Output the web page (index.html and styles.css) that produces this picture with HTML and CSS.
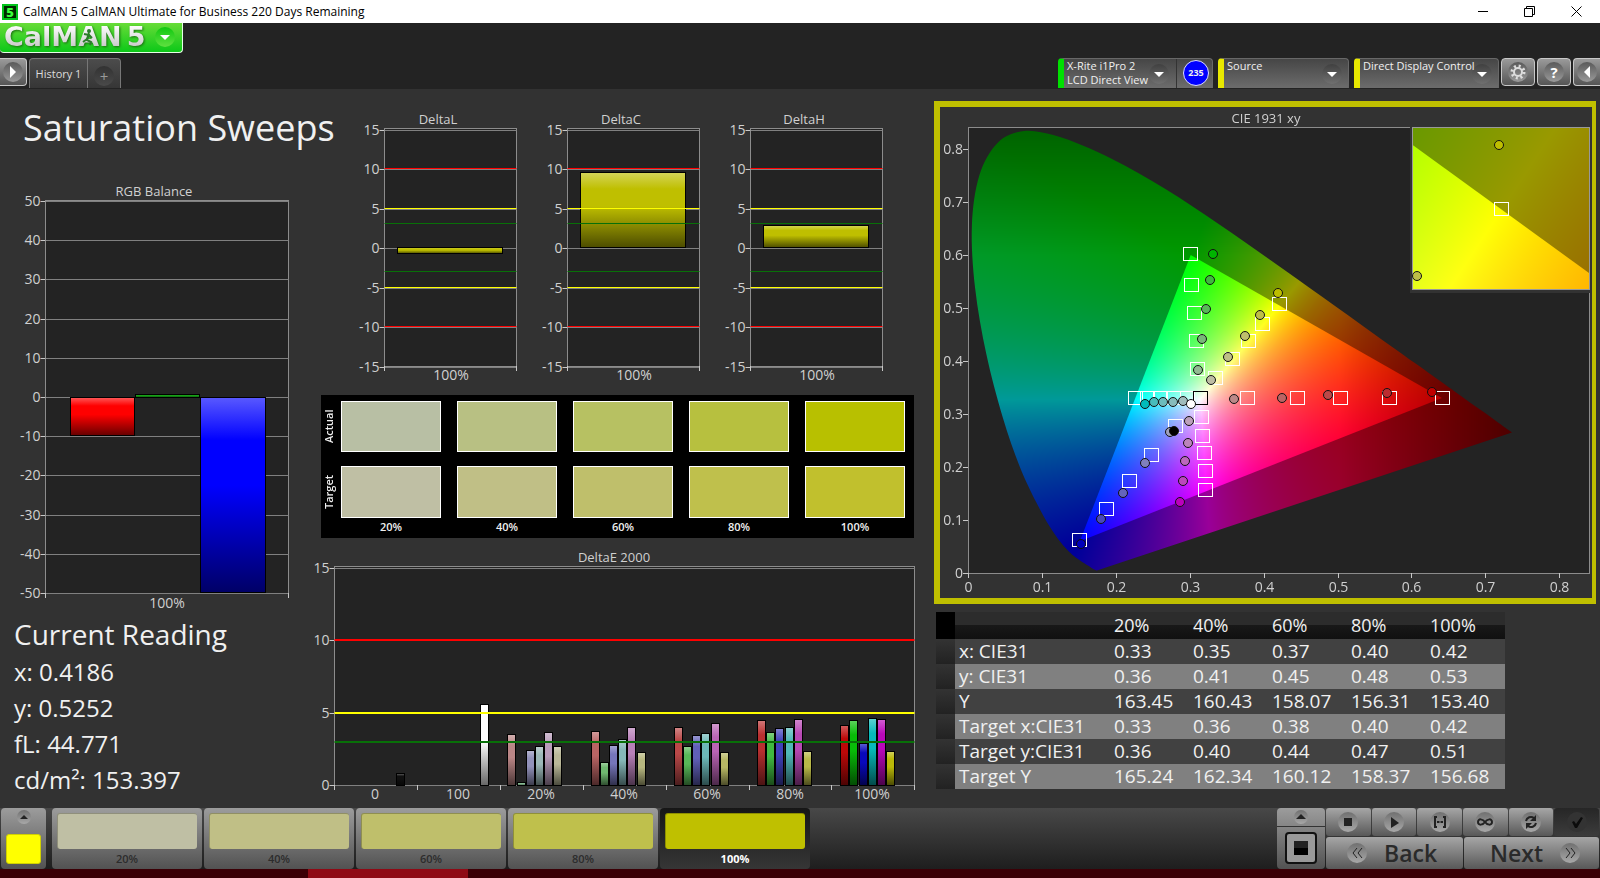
FILE: index.html
```html
<!DOCTYPE html>
<html lang="en">
  <head>
    <meta charset="UTF-8" />
    <meta name="viewport" content="width=device-width, initial-scale=1.0" />
    <title>CalMAN 5</title>
    <link rel="stylesheet" href="styles.css">
  </head>
  <body>
    <div class="titlebar">
      <span class="app-icon">5</span>
      <span class="window-title">CalMAN 5 CalMAN Ultimate for Business 220 Days Remaining</span>
      <div class="window-controls">
        <button type="button" aria-label="Minimize"><svg width="11" height="11"><path d="M0 5.5h10" /></svg></button>
        <button type="button" aria-label="Restore"><svg width="11" height="11"><path d="M.5 2.5h8v8h-8zM2.5 2.5v-2h8v8h-2" /></svg></button>
        <button type="button" aria-label="Close"><svg width="11" height="11"><path d="M.5.5l10 10M10.5.5l-10 10" /></svg></button>
      </div>
    </div>

    <header class="header">
      <button class="logo" type="button">
        <span class="logo-text">CalMAN<span class="logo-five">5</span></span>
        <svg class="runner" width="14" height="18"><circle cx="8" cy="3" r="2" /><path d="M3 6l5 1 3 3M8 7l-2 5 4 2-1 3M6 11l-4 3" /></svg>
        <span class="knob knob-green"><svg width="20" height="20"><path d="M5 8h10l-5 5z" /></svg></span>
      </button>
      <div class="toolbar">
        <button class="square side-button" type="button" aria-label="Expand">
          <span class="knob"><svg width="20" height="20"><path d="M7 4v12l6-6z" /></svg></span>
        </button>
        <nav class="tabs">
          <a class="tab" href="#history">History 1</a>
          <button class="tab-add" type="button" aria-label="Add tab"><span class="knob knob-dark">+</span></button>
        </nav>
        <div class="devices">
          <div class="device meter">
            <span>X-Rite i1Pro 2<br>LCD Direct View</span>
            <button class="knob knob-dim" type="button" aria-label="Meter menu"><svg width="20" height="20"><path d="M5 8h10l-5 5z" /></svg></button>
            <span class="meter-end"><span class="badge">235</span></span>
          </div>
          <div class="device source">
            <span>Source</span>
            <button class="knob knob-dim" type="button" aria-label="Source menu"><svg width="20" height="20"><path d="M5 8h10l-5 5z" /></svg></button>
          </div>
          <div class="device display">
            <span>Direct Display Control</span>
            <button class="knob knob-dim" type="button" aria-label="Display menu"><svg width="20" height="20"><path d="M5 8h10l-5 5z" /></svg></button>
          </div>
        </div>
        <div class="tools">
          <button class="square" type="button" aria-label="Settings">
            <span class="knob"><svg width="20" height="20"><circle class="gear" cx="10" cy="10" r="4" /><circle class="gear-teeth" cx="10" cy="10" r="6" /></svg></span>
          </button>
          <button class="square" type="button"><span class="knob">?</span></button>
          <button class="square last" type="button" aria-label="Collapse">
            <span class="knob"><svg width="20" height="20"><path d="M13 4v12l-6-6z" /></svg></span>
          </button>
        </div>
      </div>
    </header>

    <main class="workspace">
      <section class="left">
        <h1>Saturation Sweeps</h1>
        <svg class="chart" id="rgbBalance" viewBox="0 0 308 430"></svg>
        <div class="reading">
          <h2>Current Reading</h2>
          <p>x: 0.4186</p>
          <p>y: 0.5252</p>
          <p>fL: 44.771</p>
          <p>cd/m²: 153.397</p>
        </div>
      </section>

      <section class="middle">
        <div class="deltas">
          <svg class="chart" id="deltaL" viewBox="0 0 183 278"></svg>
          <svg class="chart" id="deltaC" viewBox="0 0 183 278"></svg>
          <svg class="chart" id="deltaH" viewBox="0 0 183 278"></svg>
        </div>
        <div class="swatches">
          <span class="side-label">Actual</span>
          <i class="actual-20"></i><i class="actual-40"></i><i class="actual-60"></i><i class="actual-80"></i><i class="actual-100"></i>
          <span class="side-label">Target</span>
          <i class="sat-20"></i><i class="sat-40"></i><i class="sat-60"></i><i class="sat-80"></i><i class="sat-100"></i>
          <span></span>
          <b>20%</b><b>40%</b><b>60%</b><b>80%</b><b>100%</b>
        </div>
        <svg class="chart wide" id="deltaE" viewBox="0 0 626 260"></svg>
      </section>

      <section class="right">
        <div class="cie">
          <canvas id="gamut" width="652" height="491"></canvas>
          <svg class="chart" id="ciePoints" viewBox="0 0 652 491"></svg>
        </div>
        <table class="data">
          <thead>
            <tr><th class="handle"></th><th class="name"></th><th>20%</th><th>40%</th><th>60%</th><th>80%</th><th>100%</th></tr>
          </thead>
          <tbody>
            <tr><td class="handle"></td><td>x: CIE31</td><td>0.33</td><td>0.35</td><td>0.37</td><td>0.40</td><td>0.42</td></tr>
            <tr><td class="handle"></td><td>y: CIE31</td><td>0.36</td><td>0.41</td><td>0.45</td><td>0.48</td><td>0.53</td></tr>
            <tr><td class="handle"></td><td>Y</td><td>163.45</td><td>160.43</td><td>158.07</td><td>156.31</td><td>153.40</td></tr>
            <tr><td class="handle"></td><td>Target x:CIE31</td><td>0.33</td><td>0.36</td><td>0.38</td><td>0.40</td><td>0.42</td></tr>
            <tr><td class="handle"></td><td>Target y:CIE31</td><td>0.36</td><td>0.40</td><td>0.44</td><td>0.47</td><td>0.51</td></tr>
            <tr><td class="handle"></td><td>Target Y</td><td>165.24</td><td>162.34</td><td>160.12</td><td>158.37</td><td>156.68</td></tr>
          </tbody>
        </table>
      </section>
    </main>

    <footer class="footer">
      <button class="picker" type="button" aria-label="Pattern color">
        <span class="knob knob-small"><svg width="14" height="14"><path d="M3 9h8l-4-4z" /></svg></span>
        <i></i>
      </button>
      <div class="levels">
        <button class="level" type="button"><i class="sat-20"></i>20%</button>
        <button class="level" type="button"><i class="sat-40"></i>40%</button>
        <button class="level" type="button"><i class="sat-60"></i>60%</button>
        <button class="level" type="button"><i class="sat-80"></i>80%</button>
        <button class="level active" type="button"><i class="full"></i>100%</button>
      </div>
      <div class="pattern">
        <button type="button" aria-label="Pattern menu"><span class="knob knob-small"><svg width="14" height="14"><path d="M2 9h10l-5-5z" /></svg></span></button>
        <button type="button" aria-label="Pattern window"><span class="window"></span></button>
      </div>
      <div class="transport">
        <div class="transport-row">
          <button type="button" aria-label="Stop"><span class="knob"><svg width="20" height="20"><path d="M6 6h8v8h-8z" /></svg></span></button>
          <button type="button" aria-label="Read"><span class="knob"><svg width="20" height="20"><path d="M7 5v11l8-5z" /></svg></span></button>
          <button type="button" aria-label="Read series"><span class="knob"><svg width="20" height="20"><path class="line" d="M7 5h-2v10h2M13 5h2v10h-2" /><path d="M7 9h2v2h-2zM9.500 9h1v2h-1zM11 9h2v2h-2z" /></svg></span></button>
          <button type="button" aria-label="Read continuous"><span class="knob"><svg width="20" height="20"><path class="line" d="M10 10C8 7 3 6 3 10s5 3 7 0 7-4 7 0-5 3-7 0z" /></svg></span></button>
          <button type="button" aria-label="Refresh"><span class="knob"><svg width="20" height="20"><path class="line" d="M5 9a5 5 0 0 1 8-3M15 11a5 5 0 0 1-8 3" /><path d="M15 3v6h-6zM5 17v-6h6z" /></svg></span></button>
          <button class="disabled" type="button" aria-label="Accept"><span class="knob"><svg width="20" height="20"><path d="M5 10l2-1 2 3 5-7 2 1-6 10h-2z" /></svg></span></button>
        </div>
        <div class="transport-row">
          <button class="step" type="button"><span class="knob"><svg width="20" height="20"><path class="thin" d="M10 5l-4 5 4 5M15 5l-4 5 4 5" /></svg></span>Back</button>
          <button class="step next" type="button">Next<span class="knob"><svg width="20" height="20"><path class="thin" d="M6 5l4 5-4 5M11 5l4 5-4 5" /></svg></span></button>
        </div>
      </div>
    </footer>
    <div class="taskbar"><span></span></div>

    <script src="script.js"></script>
  </body>
</html>
```

FILE: styles.css
```css
* {
  box-sizing: border-box;
}
body {
  margin: 0;
  min-height: 100vh;
  display: flex;
  flex-direction: column;
  overflow: hidden;
  background-color: #3b0006;
  color: #f0f0f0;
  font-family: "Open Sans", "Noto Sans", sans-serif;
}
button {
  padding: 0;
  border: none;
  background: none;
  color: inherit;
  font-family: inherit;
}
a {
  color: inherit;
  text-decoration: none;
}
svg {
  display: block;
}

/* Window title */
.titlebar {
  display: flex;
  align-items: center;
  height: 23px;
  padding-left: 2px;
  background-color: #fff;
  color: #000;
}
.app-icon {
  width: 16px;
  height: 16px;
  margin-right: 5px;
  background-color: #002800;
  border: 2px solid #00c41a;
  color: #3cff3c;
  font-size: 13px;
  font-weight: 800;
  line-height: 12px;
  text-align: center;
}
.window-title {
  font-size: 12px;
}
.window-controls {
  display: flex;
  margin-left: auto;
}
.window-controls button {
  display: flex;
  justify-content: center;
  width: 46px;
}
.window-controls button:last-child {
  width: 48px;
}
.window-controls path {
  fill: none;
  stroke: #000;
}

/* Header */
.header {
  display: flex;
  flex-direction: column;
  justify-content: space-between;
  height: 66px;
  padding-bottom: 1px;
  background-color: #232323;
}
.logo {
  position: relative;
  display: flex;
  align-items: center;
  width: 183px;
  height: 30px;
  padding: 0 0 2px 4px;
  border: 1px solid #e6ffe6;
  border-top: none;
  border-left: none;
  border-radius: 0 0 4px 4px;
  background: linear-gradient(#68dc38, #0cc818);
}
.logo-text {
  width: 151px;
  background: linear-gradient(#fff, #c4c4c4);
  background-clip: text;
  color: transparent;
  font-family: "DejaVu Sans", sans-serif;
  font-size: 27px;
  font-weight: bold;
  line-height: 24px;
  text-align: left;
  white-space: nowrap;
  filter: drop-shadow(1px 1px 1px #1a7010);
}
.logo-five {
  margin-left: 5px;
}
.runner {
  position: absolute;
  top: 5px;
  left: 81px;
  fill: #2c7c2c;
}
.runner path {
  fill: none;
  stroke: #2c7c2c;
  stroke-width: 2;
}
.knob {
  display: flex;
  flex: none;
  justify-content: center;
  align-items: center;
  width: 20px;
  height: 20px;
  border-radius: 50%;
  background: linear-gradient(#5a5a5a, #9a9a9a);
  color: #fff;
  font-size: 15px;
  font-weight: bold;
}
.knob svg {
  fill: #fff;
}
.knob-green {
  background: linear-gradient(#10c810, #60e040);
}
.knob-dim {
  background: linear-gradient(#404040, #707070);
}
.knob-dark {
  background: linear-gradient(#323232, #4a4a4a);
  color: #999;
  font-weight: normal;
}
.toolbar {
  display: flex;
  align-items: flex-start;
  height: 30px;
}
.square {
  display: flex;
  justify-content: center;
  align-items: center;
  width: 34px;
  height: 28px;
  border: 1px solid #c8c8c8;
  border-radius: 4px;
  background: linear-gradient(#9a9a9a, #555);
}
.side-button {
  width: 27px;
  border-left: none;
  border-radius: 0 4px 4px 0;
}
.tabs {
  display: flex;
  height: 30px;
  margin-left: 2px;
  border: 1px solid #777;
  border-bottom: none;
  border-radius: 4px 4px 0 0;
  background: linear-gradient(#4c4c4c, #363636);
}
.tab {
  width: 58px;
  border-right: 1px solid #777;
  color: #ddd;
  font-size: 11px;
  line-height: 30px;
  text-align: center;
}
.tab-add {
  display: flex;
  justify-content: center;
  align-items: center;
  width: 32px;
  padding-top: 4px;
}
.devices {
  display: flex;
  gap: 5px;
  margin-left: auto;
}
.device {
  display: flex;
  justify-content: space-between;
  height: 30px;
  padding: 0 6px 0 3px;
  border: 1px solid #686868;
  border-bottom: none;
  border-left: 6px solid #e8e800;
  border-radius: 4px 4px 0 0;
  background: linear-gradient(#464646, #6c6c6c);
  font-size: 11px;
  line-height: 14px;
  white-space: nowrap;
}
.device > span {
  z-index: 1;
}
.device .knob {
  margin-top: 5px;
}
.meter {
  width: 155px;
  padding-right: 1px;
  border-left-color: #00e000;
}
.source {
  width: 131px;
}
.display {
  width: 145px;
}
.display .knob {
  margin-left: -6px;
}
.meter-end {
  display: flex;
  justify-content: center;
  width: 35px;
  margin-left: 6px;
  border-left: 1px solid #333;
}
.badge {
  width: 26px;
  height: 26px;
  margin: 1px 0 0 4px;
  border: 1px solid #dcdcff;
  border-radius: 50%;
  background-color: #00f;
  font-size: 9px;
  font-weight: bold;
  line-height: 24px;
  text-align: center;
}
.tools {
  display: flex;
  gap: 2px;
  margin-left: 2px;
}
.square.last {
  width: 27px;
  border-right: none;
  border-radius: 4px 0 0 4px;
}
.gear {
  fill: none;
  stroke: #ddd;
  stroke-width: 2;
}
.gear-teeth {
  fill: none;
  stroke: #ddd;
  stroke-width: 3;
  stroke-dasharray: 2 2.7;
}

/* Workspace */
.workspace {
  display: grid;
  grid-template-columns: 308fr 626fr 666fr;
  align-items: start;
  min-height: 719px;
  background-color: #323232;
}
.workspace section {
  min-width: 0;
}
h1 {
  height: 93px;
  margin: 0;
  padding-left: 23px;
  font-size: 36px;
  font-weight: normal;
  line-height: 78px;
  white-space: nowrap;
}
.chart {
  width: 100%;
  height: auto;
  overflow: visible;
}
.chart text {
  fill: #d0d0d0;
  font-size: 14px;
}
.chart .title {
  font-size: 13px;
}
.plot {
  fill: #232323;
  stroke: #8c8c8c;
}
.grid {
  stroke: #808080;
}
.tick {
  stroke: #c8c8c8;
}
.limit {
  stroke-width: 1;
}
.wide .limit {
  stroke-width: 2;
}
.reading {
  padding-left: 14px;
}
.reading h2,
.reading p {
  margin: 0;
  font-size: 24px;
  font-weight: normal;
  line-height: 36px;
}
.reading h2 {
  margin-top: 4px;
  margin-bottom: 2px;
  font-size: 28px;
}
.deltas {
  display: grid;
  grid-template-columns: repeat(3, 1fr);
  padding: 19px 41px 0 36px;
}
.swatches {
  display: grid;
  grid-template-columns: 4px repeat(5, 1fr);
  grid-template-rows: 51px 52px 14px;
  gap: 14px 16px;
  margin: 9px 20px 8px 13px;
  padding: 6px 9px 0 0;
  height: 143px;
  background-color: #000;
  font-size: 11px;
}
.swatches i {
  border: 1px solid #fff;
}
.swatches .side-label {
  width: 16px;
  font-weight: 600;
  line-height: 16px;
  writing-mode: vertical-rl;
  text-align: center;
  rotate: 180deg;
}
.swatches b {
  margin-top: -12px;
  font-weight: 600;
  line-height: 14px;
  text-align: center;
}
.actual-20 { background-color: #b8bfa4; }
.actual-40 { background-color: #b8c083; }
.actual-60 { background-color: #b7c162; }
.actual-80 { background-color: #b7c03f; }
.actual-100 { background-color: #b8c000; }
.sat-20 { background-color: #bfbfa4; }
.sat-40 { background-color: #c0bf86; }
.sat-60 { background-color: #bfbf6b; }
.sat-80 { background-color: #bfc04c; }
.sat-100 { background-color: #c1c02d; }
.full { background-color: #bfc000; }

/* Chromaticity panel */
.cie {
  display: grid;
  margin: 12px 4px 0 0;
  border: 6px solid #bfbf00;
  border-right-width: 4px;
}
.cie > * {
  grid-area: 1 / 1;
  width: 100%;
}
.target {
  fill: none;
  stroke: #fff;
}
.white-point {
  stroke: #000;
}
.reading-dot {
  stroke: #111;
}

.data {
  width: 569px;
  margin: 8px 0 0 2px;
  table-layout: fixed;
  border-collapse: collapse;
  font-size: 19px;
  line-height: 25px;
}
.data th,
.data td {
  height: 25px;
  padding: 0 0 0 4px;
  text-align: left;
  white-space: nowrap;
}
.data th {
  height: 27px;
  background: linear-gradient(#2c2c2c 48%, #181818 50%, #101010);
  font-size: 18px;
  font-weight: normal;
}
.data th.handle {
  width: 19px;
  background: #000;
}
.data th.name {
  width: 155px;
}
.data tbody tr {
  background-color: #414141;
}
.data tbody tr:nth-child(even) {
  background-color: #808080;
}
.data td.handle {
  background: linear-gradient(#333, #222);
}

/* Footer */
.footer {
  display: flex;
  height: 61px;
  background: linear-gradient(#484848, #1e1e1e);
}
.picker,
.level,
.pattern {
  border-radius: 4px;
  background: linear-gradient(#9c9c9c, #525252);
}
.picker {
  display: flex;
  flex-direction: column;
  justify-content: space-between;
  align-items: center;
  width: 45px;
  margin-left: 1px;
  padding: 2px 0 5px;
}
.picker i {
  width: 35px;
  height: 30px;
  border: 1px solid #d0d000;
  border-radius: 3px;
  background-color: #ff0;
}
.knob-small {
  width: 14px;
  height: 14px;
}
.footer .knob {
  background: linear-gradient(#707070, #a8a8a8);
}
.footer .knob svg {
  fill: #222;
}
.levels {
  display: flex;
  gap: 2px;
  margin-left: 6px;
}
.level {
  width: 150px;
  padding: 5px 5px 0;
  color: #2c2c2c;
  font-size: 11px;
  font-weight: 600;
  line-height: 20px;
}
.level i {
  display: block;
  height: 36px;
  border: 1px solid rgba(0, 0, 0, 0.25);
  border-right: none;
  border-bottom: none;
  border-radius: 3px;
}
.level.active {
  background: linear-gradient(#161616, #363636);
  color: #fff;
  font-weight: bold;
}
.pattern {
  display: flex;
  flex-direction: column;
  width: 48px;
  margin-left: auto;
}
.pattern button {
  display: flex;
  justify-content: center;
  align-items: center;
  height: 18px;
}
.pattern button + button {
  height: 43px;
  border-top: 1px solid #333;
}
.window {
  width: 32px;
  height: 32px;
  border: 2px solid #111;
  border-radius: 4px;
  background: linear-gradient(#222 50%, #000 50%) center / 14px 14px no-repeat, #999;
}
.transport {
  display: flex;
  flex-direction: column;
  gap: 1px;
  width: 273px;
  margin: 0 1px;
}
.transport-row {
  display: flex;
  flex: 1;
  gap: 1px;
}
.transport-row button {
  display: flex;
  flex: 1;
  justify-content: center;
  align-items: center;
  border-radius: 3px;
  background: linear-gradient(#a6a6a6, #585858);
  color: #2a2a2a;
}
.transport-row .disabled {
  background: linear-gradient(#262626, #3c3c3c);
}
.transport-row .disabled .knob {
  background: #333;
}
.transport-row .disabled .knob svg {
  fill: #0c0c0c;
}
.transport-row .step {
  justify-content: flex-start;
  gap: 17px;
  padding-left: 21px;
  font-size: 23px;
  font-weight: 600;
}
.transport-row .next {
  justify-content: flex-end;
  padding: 0 19px 0 0;
}
.footer .knob .line {
  fill: none;
  stroke: #222;
  stroke-width: 2;
}
.footer .knob .thin {
  fill: none;
  stroke: #222;
}
.taskbar {
  flex: 1;
  min-height: 9px;
  background-color: #3b0006;
}
.taskbar span {
  display: block;
  width: 160px;
  height: 100%;
  min-height: 9px;
  margin-left: 308px;
  background-color: #8f0a15;
}
```

FILE: script.js
```js
const SVG_NS = "http://www.w3.org/2000/svg";

function add(parent, tag, attrs, text) {
  const node = document.createElementNS(SVG_NS, tag);
  for (const key in attrs) node.setAttribute(key, attrs[key]);
  if (text !== undefined) node.textContent = text;
  parent.appendChild(node);
  return node;
}

function line(svg, x1, y1, x2, y2, cls, stroke) {
  const attrs = { x1, y1, x2, y2, class: cls };
  if (stroke) attrs.stroke = stroke;
  add(svg, "line", attrs);
}

function label(svg, x, y, text, anchor) {
  add(svg, "text", { x, y: y + 5, "text-anchor": anchor || "middle" }, text);
}

function title(svg, x, y, text) {
  add(svg, "text", { x, y: y + 5, "text-anchor": "middle", class: "title" }, text);
}

// Mix a "#rrggbb" color with white (amount > 0) or black (amount < 0)
function shade(color, amount) {
  const goal = amount > 0 ? 255 : 0;
  const parts = [1, 3, 5].map((i) => {
    const v = parseInt(color.substr(i, 2), 16);
    return Math.round(v + (goal - v) * Math.abs(amount));
  });
  return `rgb(${parts.join(",")})`;
}

let gradientCount = 0;
function bar(svg, x, y, width, height, color) {
  const id = "bar" + gradientCount++;
  const gradient = add(svg, "linearGradient", { id, x1: 0, y1: 0, x2: 0, y2: 1 });
  add(gradient, "stop", { offset: "0", "stop-color": shade(color, 0.35) });
  add(gradient, "stop", { offset: "0.22", "stop-color": color });
  add(gradient, "stop", { offset: "0.45", "stop-color": color });
  add(gradient, "stop", { offset: "1", "stop-color": shade(color, -0.6) });
  add(svg, "rect", { x, y, width, height, fill: `url(#${id})`, stroke: "#000" });
}

function frame(svg, o) {
  add(svg, "rect", { x: o.left, y: o.top, width: o.right - o.left, height: o.bottom - o.top, class: "plot" });
  title(svg, o.titleX, o.titleY, o.title);
  for (const v of o.values) {
    const y = Math.round(o.zero - v * o.scale) + 0.5;
    line(svg, o.left - 5, y, o.left, y, "tick");
    line(svg, o.left, y, o.right, y, "grid");
    label(svg, o.left - 5, Math.floor(y), v, "end");
  }
}

function drawLimits(svg, o, levels, lift) {
  const colors = { 3: "#087008", 5: "#ffff00", 10: "#ff0000" };
  for (const v of levels) {
    const y = Math.round(o.zero - v * o.scale) - lift;
    line(svg, o.left, y, o.right, y, "limit", colors[Math.abs(v)]);
  }
}

// RGB balance
const rgb = document.getElementById("rgbBalance");
const rgbFrame = {
  left: 45.5, right: 288.5, top: 18.5, bottom: 411.5, zero: 215, scale: 3.92,
  title: "RGB Balance", titleX: 154, titleY: 9,
  values: [50, 40, 30, 20, 10, 0, -10, -20, -30, -40, -50],
};
frame(rgb, rgbFrame);
bar(rgb, 70.5, 215.5, 64, 38, "#ff0000");
bar(rgb, 135.5, 212.5, 64, 3, "#18a018");
bar(rgb, 200.5, 215.5, 65, 195, "#0000ff");
line(rgb, 45.5, 411, 45.5, 416, "tick");
line(rgb, 288.5, 411, 288.5, 416, "tick");
label(rgb, 167, 421, "100%");

// DeltaL, DeltaC and DeltaH
[["L", 139.5, 6], ["C", 64.5, 75], ["H", 117.5, 22]].forEach(([name, top, height]) => {
  const svg = document.getElementById("delta" + name);
  const o = {
    left: 40.5, right: 172.5, top: 20.5, bottom: 258.5, zero: 140, scale: 7.9,
    title: "Delta" + name, titleX: 94, titleY: 11,
    values: [15, 10, 5, 0, -5, -10, -15],
  };
  frame(svg, o);
  bar(svg, 53.5, top, 105, height, "#bfbf00");
  drawLimits(svg, o, [10, 5, 3, -3, -5, -10], 0.5);
  line(svg, 40.5, 258, 40.5, 263, "tick");
  line(svg, 172.5, 258, 172.5, 263, "tick");
  label(svg, 107, 267, "100%");
});

// DeltaE 2000
const de = document.getElementById("deltaE");
const deFrame = {
  left: 26.5, right: 606.5, top: 20.5, bottom: 239.5, zero: 239, scale: 14.47,
  title: "DeltaE 2000", titleX: 306, titleY: 11,
  values: [15, 10, 5, 0],
};
frame(de, deFrame);
const deBars = [
  { first: 62, heights: [12], colors: ["#101010"] },
  { first: 63, heights: [81], colors: ["#ffffff"] },
  { heights: [51, 3, 35, 39, 53, 39], colors: ["#ba8686", "#86ba92", "#9292ba", "#9cb8b8", "#b89cba", "#bab898"] },
  { heights: [54, 23, 40, 46, 58, 33], colors: ["#b86464", "#70b870", "#7676ba", "#86b8b8", "#b880b8", "#b8b880"] },
  { heights: [58, 39, 50, 52, 62, 33], colors: ["#ba4848", "#58b858", "#6060b8", "#6cb8b8", "#ba64b4", "#b8b864"] },
  { heights: [65, 53, 57, 58, 66, 34], colors: ["#ba3030", "#40b840", "#4040ba", "#50b8b8", "#b848b4", "#b8b848"] },
  { heights: [60, 65, 42, 67, 66, 34], colors: ["#bc0808", "#08bc08", "#0808bc", "#08baba", "#ba08ba", "#bab808"] },
];
["0", "100", "20%", "40%", "60%", "80%", "100%"].forEach((name, i) => {
  const x = Math.round(26 + i * 82.9);
  const barX = 26 + i * 83.2;
  const group = deBars[i];
  group.heights.forEach((h, n) => {
    bar(de, Math.round(barX + (group.first || 7 + n * 9.2)) + 0.5, 239.5 - h, 8, h, group.colors[n]);
  });
  line(de, x + 0.5, 239, x + 0.5, 244, "tick");
  label(de, x + 41, 248, name);
});
line(de, 606.5, 239, 606.5, 244, "tick");
drawLimits(de, deFrame, [10, 5, 3], 0);

// CIE 1931 gamut
const plane = { x: 29, y: 466, sx: 739, sy: 530 };
const inset = { x: 561, y: 102, sx: 3540, sy: 3240, cx: 0.4193, cy: 0.5053 };
const locus = [
  [0.1741, 0.005], [0.1733, 0.0048], [0.1714, 0.0051], [0.1689, 0.0069], [0.1644, 0.0109], [0.1566, 0.0177],
  [0.144, 0.0297], [0.1355, 0.0399], [0.1241, 0.0578], [0.1096, 0.0868], [0.0913, 0.1327], [0.0687, 0.2007],
  [0.0454, 0.295], [0.0235, 0.4127], [0.0082, 0.5384], [0.0039, 0.6548], [0.0139, 0.7502], [0.0389, 0.812],
  [0.0743, 0.8338], [0.1142, 0.8262], [0.1547, 0.8059], [0.1929, 0.7816], [0.2296, 0.7543], [0.2658, 0.7243],
  [0.3016, 0.6923], [0.3373, 0.6589], [0.3731, 0.6245], [0.4087, 0.5896], [0.4441, 0.5547], [0.4788, 0.5202],
  [0.5125, 0.4866], [0.5448, 0.4544], [0.5752, 0.4242], [0.6029, 0.3965], [0.627, 0.3725], [0.6482, 0.3514],
  [0.6658, 0.334], [0.6915, 0.3083], [0.714, 0.2859], [0.7347, 0.2653],
];
const primaries = [[0.64, 0.33], [0.3, 0.6], [0.15, 0.06]];

function colorAt(x, y) {
  const X = x / y;
  const Z = (1 - x - y) / y;
  const c = [
    3.2406 * X - 1.5372 - 0.4986 * Z,
    -0.9689 * X + 1.8758 + 0.0415 * Z,
    0.0557 * X - 0.204 + 1.057 * Z,
  ].map((v) => Math.max(v, 0));
  // deep reds and greens fade out
  const fade = Math.max(1 - Math.max(x - 0.5, 0) * 2.1 - Math.max(y - 0.6, 0) * 1.5, 0);
  const scale = (255 * fade) / Math.max(...c);
  return c.map((v) => v * scale);
}

// Closed outline; smooth ones are run through a Catmull-Rom spline
function tracePath(ctx, points, toPx, smooth) {
  const px = points.map(toPx);
  ctx.beginPath();
  ctx.moveTo(...px[0]);
  for (let i = 1; i < px.length; i++) {
    const a = px[i - 1];
    const b = px[i];
    if (!smooth) {
      ctx.lineTo(...b);
      continue;
    }
    const before = px[i - 2] || a;
    const after = px[i + 1] || b;
    ctx.bezierCurveTo(
      a[0] + (b[0] - before[0]) / 6, a[1] + (b[1] - before[1]) / 6,
      b[0] - (after[0] - a[0]) / 6, b[1] - (after[1] - a[1]) / 6,
      b[0], b[1]
    );
  }
  ctx.closePath();
}

function paint(ctx, box, toPx, toXy) {
  [[locus, 0.6, true], [primaries, 1, false]].forEach(([outline, brightness, smooth]) => {
    const layer = document.createElement("canvas");
    layer.width = box.width;
    layer.height = box.height;
    const layerCtx = layer.getContext("2d");
    const image = layerCtx.createImageData(box.width, box.height);
    for (let j = 0; j < box.height; j++) {
      for (let i = 0; i < box.width; i++) {
        const [x, y] = toXy(box.x + i, box.y + j);
        const c = colorAt(x, Math.max(y, 0.001));
        const k = (j * box.width + i) * 4;
        for (let n = 0; n < 3; n++) image.data[k + n] = c[n] * brightness;
        image.data[k + 3] = 255;
      }
    }
    layerCtx.putImageData(image, 0, 0);
    ctx.save();
    ctx.beginPath();
    ctx.rect(box.x, box.y, box.width, box.height);
    ctx.clip();
    tracePath(ctx, outline, toPx, smooth);
    ctx.clip();
    ctx.drawImage(layer, box.x, box.y);
    ctx.restore();
  });
}

const planePx = ([x, y]) => [plane.x + x * plane.sx, plane.y - y * plane.sy];
const insetPx = ([x, y]) => [inset.x + (x - inset.cx) * inset.sx, inset.y - (y - inset.cy) * inset.sy];

const ctx = document.getElementById("gamut").getContext("2d");
ctx.fillStyle = "#232323";
ctx.fillRect(29, 21, 620, 445);
paint(ctx, { x: 29, y: 21, width: 620, height: 445 }, planePx,
  (px, py) => [(px - plane.x) / plane.sx, (plane.y - py) / plane.sy]);
ctx.strokeStyle = "#8c8c8c";
ctx.strokeRect(28.5, 20.5, 621, 446);
ctx.fillStyle = "#323232";
ctx.fillRect(470, 18, 182, 168);
paint(ctx, { x: 473, y: 21, width: 176, height: 162 }, insetPx,
  (px, py) => [inset.cx + (px - inset.x) / inset.sx, inset.cy - (py - inset.y) / inset.sy]);
ctx.strokeStyle = "#999";
ctx.strokeRect(472.5, 20.5, 177, 162);

// Axis labels, targets and readings
const cie = document.getElementById("ciePoints");
title(cie, 326, 11, "CIE 1931 xy");
for (let i = 0; i <= 8; i++) {
  const text = i ? "0." + i : "0";
  const x = Math.round(29 + i * 73.9) - 0.5;
  const y = Math.round(466 - i * 53) + 0.5;
  line(cie, x, 466, x, 471, "tick");
  label(cie, x, 480, text);
  line(cie, 23, y, 28, y, "tick");
  label(cie, 23, y - 0.5, text, "end");
}

function target(x, y, cls) {
  add(cie, "rect", {
    x: Math.round(x) - 6.5, y: Math.round(y) - 6.5, width: 14, height: 13,
    class: cls ? "target " + cls : "target",
  });
}
function dot(x, y, fill) {
  add(cie, "circle", { cx: Math.round(x), cy: Math.round(y), r: 4.5, fill, class: "reading-dot" });
}

const targets = [
  [0.299, 0.602], [0.301, 0.543], [0.304, 0.491], [0.307, 0.437], [0.309, 0.385],
  [0.419, 0.508], [0.396, 0.469], [0.377, 0.437], [0.356, 0.403], [0.333, 0.367],
  [0.376, 0.33], [0.444, 0.33], [0.502, 0.33], [0.568, 0.33], [0.64, 0.33],
  [0.224, 0.33], [0.241, 0.33], [0.258, 0.33], [0.276, 0.33], [0.295, 0.33],
  [0.314, 0.294], [0.315, 0.259], [0.318, 0.226], [0.319, 0.193], [0.32, 0.157],
  [0.279, 0.277], [0.246, 0.223], [0.216, 0.173], [0.185, 0.121], [0.149, 0.062],
];
const readings = [
  [0.33, 0.602, "#00b400"], [0.326, 0.552, "#40b840"], [0.321, 0.498, "#58b858"], [0.315, 0.442, "#78b878"], [0.31, 0.383, "#92ba92"],
  [0.418, 0.528, "#bebe00"], [0.394, 0.487, "#bebe48"], [0.374, 0.448, "#bebe6b"], [0.351, 0.408, "#bebe86"], [0.328, 0.364, "#bebea4"],
  [0.626, 0.342, "#c00000"], [0.566, 0.34, "#bc2c30"], [0.486, 0.335, "#bc4848"], [0.424, 0.33, "#bc6464"], [0.359, 0.329, "#bc8888"],
  [0.238, 0.319, "#00bcbc"], [0.25, 0.322, "#48bcbc"], [0.262, 0.322, "#6cbcbc"], [0.276, 0.322, "#86bcbc"], [0.289, 0.324, "#a0bcbc"],
  [0.301, 0.319, "#ffffff"],
  [0.298, 0.286, "#bca0bc"], [0.296, 0.245, "#bc84bc"], [0.292, 0.212, "#bc68bc"], [0.289, 0.173, "#bc48bc"], [0.285, 0.134, "#bc00bc"],
  [0.272, 0.266, "#a0a0bc"], [0.278, 0.268, "#000000"], [0.238, 0.207, "#8080bc"], [0.208, 0.151, "#6464bc"], [0.179, 0.102, "#4848bc"], [0.151, 0.055, "#0000bc"],
];
targets.forEach((p) => target(...planePx(p)));
target(...planePx([0.313, 0.33]), "white-point");
readings.forEach(([x, y, fill]) => dot(...planePx([x, y]), fill));
target(...insetPx([0.4193, 0.5053]));
dot(...insetPx([0.4186, 0.5252]), "#bebe00");
dot(477, 169, "#bebe48");
```
